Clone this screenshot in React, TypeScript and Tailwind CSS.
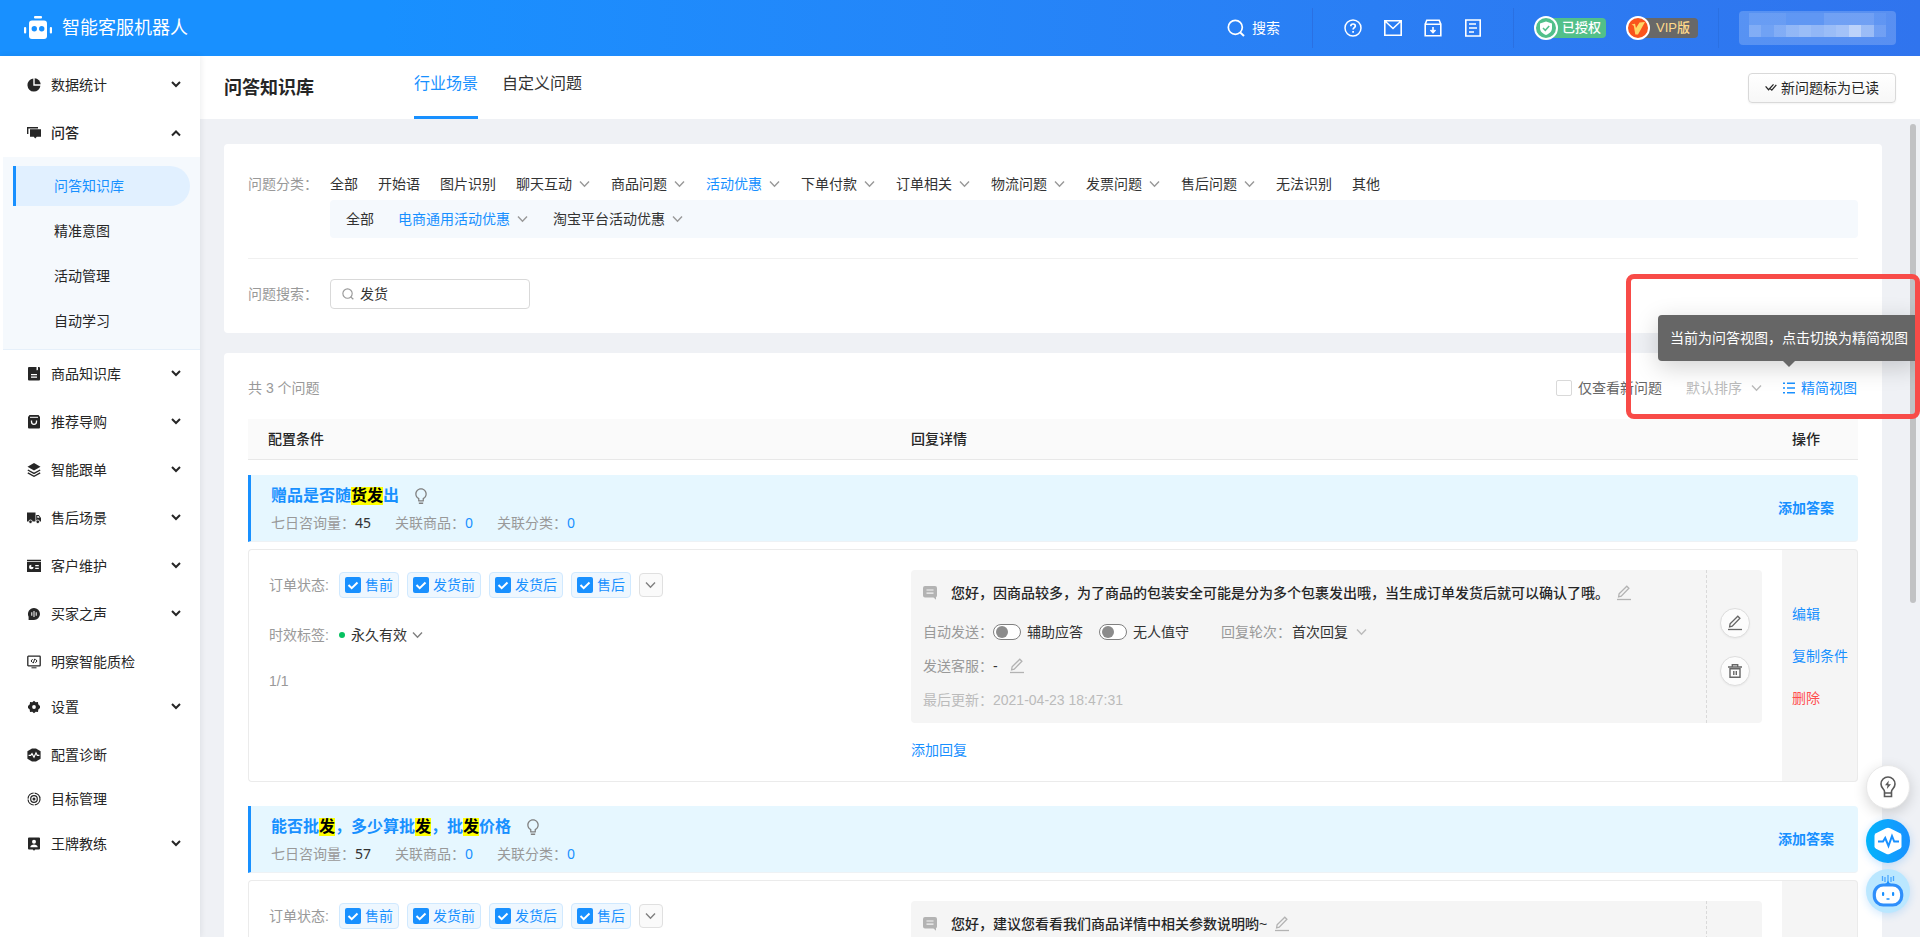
import React from 'react';
import { AiOutlineBulb } from 'react-icons/ai';

type IconProps = { className?: string };

const menuTop = [{ name: '数据统计', icon: 'pie', open: false }, { name: '问答', icon: 'chat', open: true }];

const subMenu = ['问答知识库', '精准意图', '活动管理', '自动学习'];

const menuBottom = [
  { name: '商品知识库', icon: 'book', arrow: true },
  { name: '推荐导购', icon: 'bag', arrow: true },
  { name: '智能跟单', icon: 'layers', arrow: true },
  { name: '售后场景', icon: 'truck', arrow: true },
  { name: '客户维护', icon: 'card', arrow: true },
  { name: '买家之声', icon: 'voice', arrow: true },
  { name: '明察智能质检', icon: 'monitor', arrow: false },
  { name: '设置', icon: 'gear', arrow: true },
  { name: '配置诊断', icon: 'pulse', arrow: false },
  { name: '目标管理', icon: 'target', arrow: false },
  { name: '王牌教练', icon: 'coach', arrow: true },
];

const categories = [
  { name: '全部' },
  { name: '开始语' },
  { name: '图片识别' },
  { name: '聊天互动', arrow: true },
  { name: '商品问题', arrow: true },
  { name: '活动优惠', arrow: true, active: true },
  { name: '下单付款', arrow: true },
  { name: '订单相关', arrow: true },
  { name: '物流问题', arrow: true },
  { name: '发票问题', arrow: true },
  { name: '售后问题', arrow: true },
  { name: '无法识别' },
  { name: '其他' },
];

const subCategories = [
  { name: '全部' },
  { name: '电商通用活动优惠', arrow: true, active: true },
  { name: '淘宝平台活动优惠', arrow: true },
];

const statuses = ['售前', '发货前', '发货后', '售后'];

const questions = [
  {
    id: 'q1',
    title: ['赠品是否随', '*货发', '出'],
    count: 45,
    reply: '您好，因商品较多，为了商品的包装安全可能是分为多个包裹发出哦，当生成订单发货后就可以确认了哦。',
    updated: '2021-04-23 18:47:31',
  },
  {
    id: 'q2',
    title: ['能否批', '*发', '，多少算批', '*发', '，批', '*发', '价格'],
    count: 57,
    reply: '您好，建议您看看我们商品详情中相关参数说明哟~',
    updated: '2021-04-23 18:47:31',
  },
];

// Two rows of tiles that hide the account name
const mosaic = [
  'bg-white/10', 'bg-white/10', 'bg-white/10', 'bg-white/5', 'bg-white/5', 'bg-white/5',
  'bg-white/15', 'bg-white/15', 'bg-white/15', 'bg-white/15', 'bg-white/5',
  'bg-white/25', 'bg-white/15', 'bg-white/25', 'bg-white/35', 'bg-white/40', 'bg-white/35',
  'bg-white/40', 'bg-white/45', 'bg-white/60', 'bg-white/40', 'bg-white/15',
];

function MenuIcon({ name }: { name: string }) {
  return (
    <svg viewBox="0 0 14 14" className="h-[14px] w-[14px] shrink-0" fill="#262626" aria-hidden="true">
      {name === 'pie' && (
        <>
          <path d="M6.3.6A6.5 6.5 0 1 0 13.4 7.7H6.3z" />
          <path d="M7.7.3v6h6A6.3 6.3 0 0 0 7.7.3z" />
        </>
      )}
      {name === 'chat' && (
        <>
          <path d="M0 1h11v1.4H1.4V8H0z" />
          <path d="M3 3.2h11v7.6H9.8L8.2 12.6 6.8 10.8H3z" />
        </>
      )}
      {name === 'book' && (
        <>
          <path d="M2 0h10a1 1 0 0 1 1 1v11.500a1 1 0 0 1-1 1H2a1 1 0 0 1-1-1V1a1 1 0 0 1 1-1z" />
          <path d="M9.500 0h1.500v3.500l-.8-.7-.7.7zM4 7h6v1.200H4zM4 9.600h6v1.200H4z" fill="#fff" />
        </>
      )}
      {name === 'bag' && (
        <>
          <path d="M2.500 0h9L13 2v10.500a1 1 0 0 1-1 1H2a1 1 0 0 1-1-1V2z" />
          <path d="M3 1.800h8v1H3z" fill="#fff" />
          <path d="M4.500 5.500v1.300a2.500 2.500 0 0 0 5 0V5.500" fill="none" stroke="#fff" strokeWidth="1.300" />
        </>
      )}
      {name === 'layers' && (
        <>
          <path d="M7 0l6.500 3.700L7 7.400.5 3.700z" />
          <path d="M.8 7L7 10.400 13.200 7M.8 9.900L7 13.300l6.200-3.400" fill="none" stroke="#262626" strokeWidth="1.300" />
        </>
      )}
      {name === 'truck' && (
        <>
          <path d="M0 1.500h8.500v9H0zM9.200 4h2.600L14 7v3.500H9.200z" />
          <circle cx="3.500" cy="10.800" r="1.800" stroke="#fff" strokeWidth=".8" />
          <circle cx="10.800" cy="10.800" r="1.800" stroke="#fff" strokeWidth=".8" />
          <path d="M10.300 5h1.200l1.100 1.700h-2.300z" fill="#fff" />
        </>
      )}
      {name === 'card' && (
        <>
          <path d="M0 .8h14v1.400H0zM0 3h14v10H0z" />
          <path d="M8.200 6h3.600v1.200H8.200zM8.200 8.700h3.600v1.200H8.200z" fill="#fff" />
          <path d="M4.300 5.700v2.300h2.300a2.300 2.300 0 1 1-2.300-2.300z" fill="#fff" />
        </>
      )}
      {name === 'voice' && (
        <>
          <path d="M7 1a6 6 0 1 1 0 12H1.600v-3.300A6 6 0 0 1 7 1z" />
          <path d="M4.300 5.200h1v3.600h-1zM6.500 4h1v6h-1zM8.700 5.200h1v3.600h-1z" fill="#fff" />
        </>
      )}
      {name === 'monitor' && (
        <g fill="none" stroke="#262626" strokeWidth="1.300">
          <rect x=".8" y="1.200" width="12.400" height="9.600" rx=".6" />
          <path d="M4.500 12.800h5M5.600 4.200L4 6l1.600 1.600M8.400 4.200L10 6 8.400 7.800M7.700 3.800L6.300 8.200" strokeWidth="1" />
        </g>
      )}
      {name === 'gear' && (
        <>
          <path d="M7 .8l1.700 1.500 2.300-.2.200 2.200L13 6.100v1.800l-1.700 1.700-.3 2.300-2.300-.2L7 13.200l-1.700-1.500-2.300.2-.3-2.300L1 7.900V6.100l1.800-1.800.2-2.200 2.300.2z" />
          <circle cx="7" cy="7" r="1.900" fill="#fff" />
        </>
      )}
      {name === 'pulse' && (
        <>
          <path d="M5 .5h4l4.600 2.800v7.400L9 13.500H5L.4 10.700V3.300z" />
          <path d="M1.600 7.400h2.100L5 5.600 7 9.200 9 4.800l1.300 2.600h2.100" fill="none" stroke="#fff" strokeWidth="1.200" />
        </>
      )}
      {name === 'target' && (
        <g fill="none" stroke="#262626" strokeWidth="1.200">
          <circle cx="7" cy="7" r="6" strokeDasharray="8.400 1" />
          <circle cx="7" cy="7" r="3.300" />
          <circle cx="7" cy="7" r=".9" />
        </g>
      )}
      {name === 'coach' && (
        <>
          <path d="M2 .5h10a1 1 0 0 1 1 1v10a1 1 0 0 1-1 1H8.300L7 13.800l-1.300-1.300H2a1 1 0 0 1-1-1v-10a1 1 0 0 1 1-1z" />
          <circle cx="7" cy="4.800" r="2" fill="#fff" />
          <path d="M3.300 10.300c0-3.600 7.400-3.600 7.400 0z" fill="#fff" />
        </>
      )}
    </svg>
  );
}

function Chevron({ className = '' }: IconProps) {
  return (
    <svg viewBox="0 0 12 12" className={`h-3 w-3 shrink-0 ${className}`} fill="none" stroke="currentColor" strokeWidth="1.4" aria-hidden="true">
      <path d="M1 3.500l4.500 4.800L10 3.500" />
    </svg>
  );
}

function MenuArrow({ up }: { up?: boolean }) {
  return (
    <svg viewBox="0 0 10 10" className="ml-auto h-[10px] w-[10px]" fill="none" stroke="#262626" strokeWidth="2" aria-hidden="true">
      {up ? <path d="M1 7.500l4-4 4 4" /> : <path d="M1 2l4 4 4-4" />}
    </svg>
  );
}

function SearchIcon({ className = '' }: IconProps) {
  return (
    <svg viewBox="0 0 18 18" className={className} fill="none" stroke="currentColor" strokeWidth="1.700" aria-hidden="true">
      <circle cx="8.300" cy="8.300" r="7" />
      <path d="M13 13.300l4 3.700" strokeWidth="2" />
    </svg>
  );
}

function PencilIcon({ className = '' }: IconProps) {
  return (
    <svg viewBox="0 0 14 16" className={`h-4 w-[14px] shrink-0 ${className}`} fill="none" stroke="currentColor" strokeWidth="1.300" aria-hidden="true">
      <path d="M1.600 11.800l.5-2.900 7.700-7.700 2.100 2.100-7.700 7.800z" />
      <path d="M0 14.500h14" />
    </svg>
  );
}

function RobotLogo() {
  return (
    <svg viewBox="0 0 28 24" className="h-6 w-7" fill="#fff" aria-hidden="true">
      <rect x="10" y="0" width="8" height="2.500" rx="1" />
      <rect x="5" y="4.500" width="18" height="18.500" rx="3" />
      <rect x="0" y="11" width="2.200" height="6.500" rx="1" />
      <rect x="25.800" y="11" width="2.200" height="6.500" rx="1" />
      <circle cx="10.300" cy="12.700" r="2.700" fill="#1890ff" />
      <circle cx="17.700" cy="12.700" r="2.700" fill="#1890ff" />
    </svg>
  );
}

function Header() {
  return (
    <header className="flex h-14 shrink-0 items-center bg-linear-to-r from-[#1890ff] from-20% to-[#3074ee] pr-6 pl-6 text-sm text-white">
      <RobotLogo />
      <span className="ml-[10px] text-lg">智能客服机器人</span>

      <button className="ml-auto flex items-center gap-[7px] pr-8">
        <SearchIcon className="h-[18px] w-[18px]" />
        搜索
      </button>
      <div className="flex h-10 items-center gap-[22px] border-x border-[#2a70e2] px-[31px]">
        <button aria-label="帮助">
          <svg viewBox="0 0 18 18" className="h-[18px] w-[18px]" fill="none" stroke="#fff" strokeWidth="1.500">
            <circle cx="9" cy="9" r="8" />
            <path d="M6.800 7.200c0-3 4.500-2.800 4.500-.2 0 1.600-2.200 1.700-2.200 3.500M9.100 12v1.700" strokeWidth="1.700" />
          </svg>
        </button>
        <button aria-label="消息">
          <svg viewBox="0 0 18 18" className="h-[18px] w-[18px]" fill="none" stroke="#fff" strokeWidth="1.600">
            <path d="M.8 1.800h16.400v14.400H.8zM1 2l8 7.500L17 2" />
          </svg>
        </button>
        <button aria-label="下载">
          <svg viewBox="0 0 18 18" className="h-[18px] w-[18px]" fill="none" stroke="#fff" strokeWidth="1.600">
            <path d="M1.200 5.200h15.600v11.500H1.200zM1.200 5.200l1.600-4h12.400l1.600 4M9 8v5M6.500 11L9 13.500l2.500-2.500" />
          </svg>
        </button>
        <button aria-label="文档">
          <svg viewBox="0 0 18 18" className="h-[18px] w-[18px]" fill="none" stroke="#fff" strokeWidth="1.600">
            <path d="M1.800 1h14.400v16H1.800zM5 5h7M5 9h8M5 13h5" />
          </svg>
        </button>
      </div>
      <div className="flex h-10 items-center gap-5 border-r border-[#2a70e2] pr-5 pl-5">
        <div className="flex items-center">
          <svg viewBox="0 0 24 24" className="z-10 h-6 w-6" aria-hidden="true">
            <circle cx="12" cy="12" r="11" fill="#52c08a" stroke="#fff" strokeWidth="2" />
            <path d="M12 5.500l6 2v4.500c0 3.500-2.500 5.600-6 7-3.500-1.400-6-3.500-6-7V7.500z" fill="#fff" />
            <path d="M9 12l2.300 2.300L15.200 10" fill="none" stroke="#52c08a" strokeWidth="1.500" />
          </svg>
          <span className="-ml-3 flex h-5 items-center rounded bg-[#52c08a] pr-[5px] pl-4 text-[13px] font-medium">已授权</span>
        </div>
        <div className="flex items-center">
          <svg viewBox="0 0 24 24" className="z-10 h-6 w-6" aria-hidden="true">
            <circle cx="12" cy="12" r="11" fill="#fa541c" stroke="#fff" strokeWidth="2" />
            <path d="M5.500 8.500l3.500-.7 1 4.200 3.500-5.500L19 6l-7 12.500H9.300L7.800 9.800z" fill="#ffd666" />
          </svg>
          <span className="-ml-3 flex h-5 items-center rounded bg-[#686868] pr-2 pl-[18px] text-[13px] font-medium text-[#ffd98a]">VIP版</span>
        </div>
      </div>
      <div className="ml-5 grid h-[34px] w-[157px] grid-cols-11 content-start rounded bg-white/20 px-[10px] pt-[2px]" aria-hidden="true">
        {mosaic.map((tone, index) => (
          <span key={index} className={`h-3 ${tone}`} />
        ))}
      </div>
    </header>
  );
}

function Sidebar() {
  return (
    <nav className="z-10 w-[200px] shrink-0 bg-white pt-[5px] text-sm text-[#262626] shadow-[1px_0_6px_rgba(0,21,41,0.08)]">
      {menuTop.map((item) => (
        <a key={item.name} href="#" className={`flex h-12 items-center gap-[10px] pr-[19px] pl-[27px] ${item.open ? 'font-medium' : ''}`}>
          <MenuIcon name={item.icon} />
          {item.name}
          <MenuArrow up={item.open} />
        </a>
      ))}
      <div className="ml-[3px] flex flex-col gap-[5px] border-b border-[#e6f0fa] bg-[#f5f9fd] px-[10px] pt-[9px] pb-2">
        {subMenu.map((item, index) => (
          <a
            key={item}
            href="#"
            className={`flex h-10 items-center rounded-r-full border-l-[3px] pl-[38px] ${index === 0 ? 'border-[#1890ff] bg-[#e1f0ff] text-[#1890ff]' : 'border-transparent'}`}
          >
            {item}
          </a>
        ))}
      </div>
      {menuBottom.map((item) => (
        <a
          key={item.name}
          href="#"
          className={`flex items-center gap-[10px] pr-[19px] pl-[27px] ${item.arrow ? 'h-12' : 'mt-1 mb-px h-10'}`}
        >
          <MenuIcon name={item.icon} />
          {item.name}
          {item.arrow && <MenuArrow />}
        </a>
      ))}
    </nav>
  );
}

function CategoryButton({ name, arrow, active }: { name: string; arrow?: boolean; active?: boolean }) {
  return (
    <button className={`flex items-center gap-[7px] whitespace-nowrap ${active ? 'text-[#1890ff]' : ''}`}>
      {name}
      {arrow && <Chevron className="text-[#999]" />}
    </button>
  );
}

function Filters() {
  return (
    <section className="rounded bg-white px-6 pt-6 pb-6">
      <div className="flex">
        <span className="w-[82px] shrink-0 leading-8 text-[#999]">问题分类：</span>
        <div className="min-w-0 flex-1">
          <div className="flex h-8 items-center gap-5">
            {categories.map((item) => (
              <CategoryButton key={item.name} {...item} />
            ))}
          </div>
          <div className="flex h-[38px] items-center gap-6 rounded bg-[#f5f9fd] px-4">
            {subCategories.map((item) => (
              <CategoryButton key={item.name} {...item} />
            ))}
          </div>
        </div>
      </div>
      <div className="mt-5 flex items-center border-t border-[#f0f0f0] pt-5">
        <label htmlFor="keyword" className="w-[82px] text-[#999]">问题搜索：</label>
        <div className="flex h-[30px] w-[200px] items-center gap-[6px] rounded border border-[#d9d9d9] px-[11px]">
          <SearchIcon className="h-3 w-3 shrink-0 text-[#999]" />
          <input id="keyword" type="text" defaultValue="发货" className="w-full min-w-0 outline-none" />
        </div>
      </div>
    </section>
  );
}

function QuestionHead({ title, count }: { title: string[]; count: number }) {
  return (
    <div className="flex h-[67px] items-center justify-between rounded-r border-b border-l-[3px] border-b-[#eef2f5] border-l-[#1890ff] bg-[#e6f7ff] pr-6 pl-5">
      <div>
        <div className="flex items-center gap-[13px] pt-px">
          <h2 className="text-base leading-7 font-bold text-[#1890ff]">
            {title.map((part, index) =>
              part.startsWith('*') ? (
                <mark key={index} className="inline-block bg-[#ffff00] leading-[18px] text-black">{part.slice(1)}</mark>
              ) : (
                <span key={index}>{part}</span>
              )
            )}
          </h2>
          <AiOutlineBulb className="h-[18px] w-[18px] text-[#808080]" />
        </div>
        <p className="flex gap-6 leading-[26px] text-[#999]">
          <span className="flex">七日咨询量：<span className="font-['Noto_Sans'] text-[#333]">{count}</span></span>
          <span className="flex">关联商品：<a href="#" className="font-['Noto_Sans'] text-[#1890ff]">0</a></span>
          <span className="flex">关联分类：<a href="#" className="font-['Noto_Sans'] text-[#1890ff]">0</a></span>
        </p>
      </div>
      <button className="font-bold text-[#1890ff]">添加答案</button>
    </div>
  );
}

function Toggle({ label }: { label: string }) {
  return (
    <label className="flex items-center gap-[6px]">
      <input
        type="checkbox"
        role="switch"
        className="flex h-4 w-7 appearance-none items-center rounded-full border border-[#808080] bg-white px-[2px] before:h-3 before:w-3 before:rounded-full before:bg-[#8c8c8c]"
      />
      {label}
    </label>
  );
}

function Conditions({ id }: { id: string }) {
  return (
    <>
      <fieldset className="flex items-center">
        <span className="w-[70px] text-[#999]">订单状态:</span>
        <div className="flex items-center gap-2">
          {statuses.map((status) => (
            <label key={status} className="flex h-[26px] items-center gap-1 rounded border border-[#d0e9ff] bg-[#eef7ff] px-[5px] text-[#1890ff]">
              <span className="relative h-4 w-4">
                <input type="checkbox" defaultChecked className="block h-4 w-4 appearance-none rounded-xs bg-[#1890ff]" />
                <svg viewBox="0 0 16 16" className="pointer-events-none absolute inset-0 h-4 w-4" fill="none" stroke="#fff" strokeWidth="2" aria-hidden="true">
                  <path d="M3.500 8l3.200 3.200L12.500 5.500" />
                </svg>
              </span>
              {status}
            </label>
          ))}
          <button aria-label="更多状态" className="flex h-6 w-6 items-center justify-center rounded border border-[#e0e0e0] bg-[#fafafa] text-[#808080]">
            <Chevron />
          </button>
        </div>
      </fieldset>
      <div className="mt-[27px] flex h-5 items-center">
        <label htmlFor={`${id}-period`} className="w-[70px] text-[#999]">时效标签:</label>
        <span className="mr-[6px] h-[6px] w-[6px] rounded-full bg-[#07c160]" />
        <select id={`${id}-period`} className="w-14 appearance-none">
          <option>永久有效</option>
        </select>
        <Chevron className="ml-[5px] text-[#808080]" />
      </div>
      <p className="mt-[26px] leading-5 text-[#999]">1/1</p>
    </>
  );
}

function Reply({ id, reply, updated }: { id: string; reply: string; updated: string }) {
  return (
    <>
      <div className="flex h-[153px] rounded bg-[#f5f5f5]">
        <div className="min-w-0 flex-1 pt-3 pl-3">
          <div className="flex h-[22px] items-center">
            <svg viewBox="0 0 14 14" className="h-[14px] w-[14px] shrink-0" aria-hidden="true">
              <path d="M2 0h10a2 2 0 0 1 2 2v7.500a2 2 0 0 1-1 1.700v2.500L10.500 11.500H2a2 2 0 0 1-2-2V2a2 2 0 0 1 2-2z" fill="#b3b3b3" />
              <path d="M3.500 4h7M3.500 7.200h7" stroke="#f5f5f5" strokeWidth="1.200" />
            </svg>
            <span className="ml-[14px] font-medium text-[#262626]">{reply}</span>
            <button aria-label="编辑回复" className="ml-2"><PencilIcon className="text-[#b3b3b3]" /></button>
          </div>
          <div className="mt-[18px] flex h-5 items-center">
            <span className="w-[70px] text-[#999]">自动发送：</span>
            <div className="flex gap-4">
              <Toggle label="辅助应答" />
              <Toggle label="无人值守" />
            </div>
            <label htmlFor={`${id}-round`} className="ml-8 w-[71px] text-[#999]">回复轮次：</label>
            <select id={`${id}-round`} className="w-14 appearance-none">
              <option>首次回复</option>
            </select>
            <Chevron className="ml-2 text-[#bbb]" />
          </div>
          <div className="mt-[14px] flex h-5 items-center">
            <span className="w-[70px] text-[#999]">发送客服：</span>
            <span>-</span>
            <button aria-label="编辑客服" className="ml-3"><PencilIcon className="text-[#b3b3b3]" /></button>
          </div>
          <p className="mt-[14px] leading-5 text-[#bbb]">最后更新：{updated}</p>
        </div>
        <div className="flex w-14 shrink-0 flex-col items-center justify-center gap-[18px] border-l border-dashed border-[#d9d9d9]">
          <button aria-label="编辑" className="flex h-[30px] w-[30px] items-center justify-center rounded-full border border-[#ddd] bg-[#fcfcfc] text-[#666] shadow-xs">
            <PencilIcon />
          </button>
          <button aria-label="删除回复" className="flex h-[30px] w-[30px] items-center justify-center rounded-full border border-[#ddd] bg-[#fcfcfc] text-[#666] shadow-xs">
            <svg viewBox="0 0 14 14" className="h-[14px] w-[14px]" fill="none" stroke="currentColor" strokeWidth="1.400">
              <path d="M0 3h14M4.300 3V.8h5.400V3M2 4.800h10v8.400H2zM5.800 7v4M8.300 7v4" />
            </svg>
          </button>
        </div>
      </div>
      <button className="mt-[17px] block h-5 leading-5 text-[#1890ff]">添加回复</button>
    </>
  );
}

function Toolbar() {
  return (
    <div className="mb-[15px] flex h-8 items-center pr-px">
      <span className="text-[#999]">共 3 个问题</span>
      <label className="ml-auto flex items-center gap-[6px] text-[#666]">
        <input type="checkbox" className="h-4 w-4 appearance-none rounded-xs border border-[#d9d9d9] bg-white" />
        仅查看新问题
      </label>
      <div className="ml-6 flex items-center text-[#bbb]">
        <select aria-label="排序" className="w-14 appearance-none">
          <option>默认排序</option>
        </select>
        <Chevron className="ml-[9px]" />
      </div>
      <div className="relative ml-5">
        <button className="flex items-center gap-[6px] text-[#1890ff]" aria-describedby="view-tip">
          <svg viewBox="0 0 12 12" className="h-3 w-3" stroke="currentColor" strokeWidth="1.400" aria-hidden="true">
            <path d="M0 1.200h2M4 1.200h8M0 6h2M4 6h8M0 10.800h2M4 10.800h8" />
          </svg>
          精简视图
        </button>
        <div
          id="view-tip"
          role="tooltip"
          className="absolute bottom-[37px] -left-[125px] z-20 flex h-[46px] items-center rounded bg-[#666] pr-3 pl-3 whitespace-nowrap text-white shadow-[0_6px_24px_rgba(0,0,0,0.18)]"
        >
          当前为问答视图，点击切换为精简视图
          <span className="absolute top-full left-[125px] border-x-6 border-t-6 border-x-transparent border-t-[#666]" />
        </div>
      </div>
    </div>
  );
}

function QuestionList() {
  return (
    <section className="mt-5 rounded bg-white px-6 pt-[19px] pb-6">
      <Toolbar />
      <table className="w-full table-fixed border-separate border-spacing-0 text-left">
        <thead>
          <tr className="h-[41px] bg-[#fafafa] text-[#262626]">
            <th className="w-2/5 border-b border-[#e8e8e8] pl-5 font-medium">配置条件</th>
            <th className="border-b border-[#e8e8e8] pl-[19px] font-medium">回复详情</th>
            <th className="w-[76px] border-b border-[#e8e8e8] pl-[10px] font-medium">操作</th>
          </tr>
        </thead>
        {questions.map((q, index) => (
          <tbody key={q.id}>
            <tr>
              <td colSpan={3} className={`pb-[7px] ${index === 0 ? 'pt-[15px]' : 'pt-6'}`}>
                <QuestionHead title={q.title} count={q.count} />
              </td>
            </tr>
            <tr className="align-top">
              <td className="rounded-l border-y border-l border-[#ebebeb] pt-[22px] pl-5">
                <Conditions id={q.id} />
              </td>
              <td className="border-y border-[#ebebeb] pt-5 pr-5 pb-[21px] pl-[19px]">
                <Reply id={q.id} reply={q.reply} updated={q.updated} />
              </td>
              <td className="rounded-r border-y border-r border-[#ebebeb] bg-[#f5f5f5] pt-[54px] pl-[10px]">
                <div className="flex flex-col items-start gap-[22px] leading-5 whitespace-nowrap text-[#1890ff]">
                  <button>编辑</button>
                  <button>复制条件</button>
                  <button className="text-[#ff4d4f]">删除</button>
                </div>
              </td>
            </tr>
          </tbody>
        ))}
      </table>
    </section>
  );
}

function FloatButtons() {
  return (
    <div className="fixed right-[10px] bottom-6 z-30 flex flex-col items-center">
      <button aria-label="建议" className="mb-[10px] flex h-11 w-11 items-center justify-center rounded-full border border-[#e8e8e8] bg-white shadow-[0_4px_14px_rgba(0,0,0,0.16)]">
        <svg viewBox="0 0 16 22" className="h-[22px] w-4" fill="none" stroke="#595959" strokeWidth="1.600">
          <path d="M4.500 15.500c0-2.500-3.500-3.500-3.500-7.500a7 7 0 0 1 14 0c0 4-3.500 5-3.500 7.500v5h-7zM4.500 17h7" />
          <path d="M8.800 4.500L5 9.300h2.500l-.6 3.700L11 8.200H8.300z" fill="#595959" stroke="none" />
        </svg>
      </button>
      <button aria-label="诊断" className="mb-[6px] flex h-11 w-11 items-center justify-center rounded-full bg-linear-to-r from-[#03b4fb] to-[#1890ff] shadow-[0_2px_8px_rgba(24,144,255,0.25)]">
        <svg viewBox="0 0 28 28" className="h-7 w-7" fill="#fff">
          <path d="M12 1.200q2-1 4 0l10 5q1.500.8 1.500 2.500v10.600q0 1.700-1.500 2.500l-10 5q-2 1-4 0l-10-5Q.5 21 .5 19.300V8.700q0-1.700 1.500-2.500z" />
          <path d="M4 14.500h5l2.200-3.500 3.300 8 3.500-10 2.200 5.500H25" fill="none" stroke="#1890ff" strokeWidth="2" />
        </svg>
      </button>
      <button aria-label="机器人助手" className="flex h-11 w-11 items-center justify-center rounded-full bg-[#bae7ff] shadow-[0_2px_8px_rgba(24,144,255,0.2)]">
        <svg viewBox="0 0 32 32" className="h-8 w-8">
          <path d="M16 0v9M13 2v5M19 2v5M10.500 1v5M21.500 1v5" stroke="#4aa8ff" strokeWidth="1.300" />
          <path d="M11 9.500q4-.5 5-4 1 3.500 5 4z" fill="#1890ff" />
          <rect x="2.300" y="10" width="27.400" height="20" rx="9" fill="#fff" stroke="#2f8ffb" strokeWidth="3.200" />
          <rect x="10" y="17" width="2.200" height="4" rx="1" fill="#1890ff" />
          <rect x="20" y="17" width="2.200" height="4" rx="1" fill="#1890ff" />
          <path d="M14.500 24h3" stroke="#1890ff" strokeWidth="1.500" />
        </svg>
      </button>
    </div>
  );
}

function App() {
  return (
    <div className="flex h-screen flex-col overflow-hidden font-['Liberation_Sans','Noto_Sans_CJK_SC',sans-serif] text-sm text-[#333]">
      <Header />
      <div className="flex min-h-0 flex-1">
        <Sidebar />
        <main className="flex min-w-0 flex-1 flex-col bg-[#eff1f5]">
          {/* Page title and tabs */}
          <div className="flex h-[63px] shrink-0 items-center bg-white px-6">
            <h1 className="w-[190px] text-lg font-bold text-[#262626]">问答知识库</h1>
            <div className="flex gap-6 self-stretch text-base">
              <a href="#" className="flex items-center border-b-[3px] border-[#1890ff] pb-1 text-[#1890ff]">行业场景</a>
              <a href="#" className="flex items-center border-b-[3px] border-transparent pb-1">自定义问题</a>
            </div>
            <button className="ml-auto flex h-[30px] items-center gap-1 rounded border border-[#d9d9d9] bg-linear-to-b from-white to-[#f7f7f7] px-4 text-[#262626] shadow-xs">
              <svg viewBox="0 0 13 10" className="h-[9px] w-3" fill="none" stroke="currentColor" strokeWidth="1.400" aria-hidden="true">
                <path d="M.5 3.800l3.300 3.700 5.500-6M5.800 6.500l1.600 1.500 5-6" />
              </svg>
              新问题标为已读
            </button>
          </div>

          <div className="relative min-h-0 flex-1">
            <div className="h-full overflow-x-hidden overflow-y-auto pt-[25px] pr-[38px] pl-6 [scrollbar-width:none]">
              <Filters />
              <QuestionList />
            </div>
            {/* Scrollbar thumb */}
            <div className="absolute top-[5px] right-1 h-[479px] w-[6px] rounded-full bg-[#c1c2c4]" />
            {/* Callout frame round the view switch */}
            <div className="pointer-events-none absolute top-[155px] right-0 z-30 h-[145px] w-[294px] rounded-lg border-5 border-[#f84b48]" />
          </div>
        </main>
      </div>
      <FloatButtons />
    </div>
  );
}

export default App;
